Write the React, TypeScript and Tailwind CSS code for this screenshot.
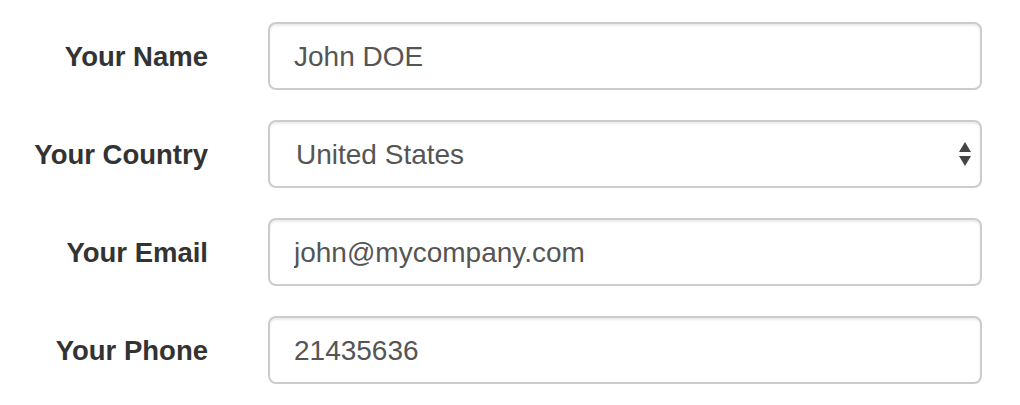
import React from "react";

const fields = [
  { label: "Your Name", value: "John DOE" },
  { label: "Your Country", value: "United States", select: true },
  { label: "Your Email", value: "john@mycompany.com" },
  { label: "Your Phone", value: "21435636" }
];

const boxClass =
  "h-[68px] w-[714px] rounded-[8px] border-2 border-[#cccccc] bg-white shadow-[inset_0_2px_2px_rgba(0,0,0,0.075)] text-[28px] text-[#555555] outline-none";

function SelectBox({ value }: { value: string }) {
  return (
    <div className={`${boxClass} relative flex items-center pl-[26px] pr-[8px] pt-[2px]`}>
      <span className="flex-1">{value}</span>
      <svg width="14" height="26" viewBox="0 0 14 26" className="text-[#444444]">
        <path d="M7 0 L13 10 L1 10 Z" fill="currentColor" />
        <path d="M1 14 L13 14 L7 24 Z" fill="currentColor" />
      </svg>
    </div>
  );
}

export default function App() {
  return (
    <div
      className="w-[1020px] h-[405px] bg-white pt-[22px]"
      style={{ fontFamily: '"Liberation Sans", Arial, sans-serif' }}
    >
      <form className="flex flex-col gap-[30px]">
        {fields.map((field) => (
          <div key={field.label} className="flex items-center gap-[60px]">
            <label className="w-[208px] pt-[2px] text-right text-[27.5px] font-bold text-[#333333]">
              {field.label}
            </label>
            {field.select ? (
              <SelectBox value={field.value} />
            ) : (
              <input
                type="text"
                defaultValue={field.value}
                className={`${boxClass} px-[24px] pt-[2px]`}
                style={{ fontFamily: '"Liberation Sans", Arial, sans-serif' }}
              />
            )}
          </div>
        ))}
      </form>
    </div>
  );
}
